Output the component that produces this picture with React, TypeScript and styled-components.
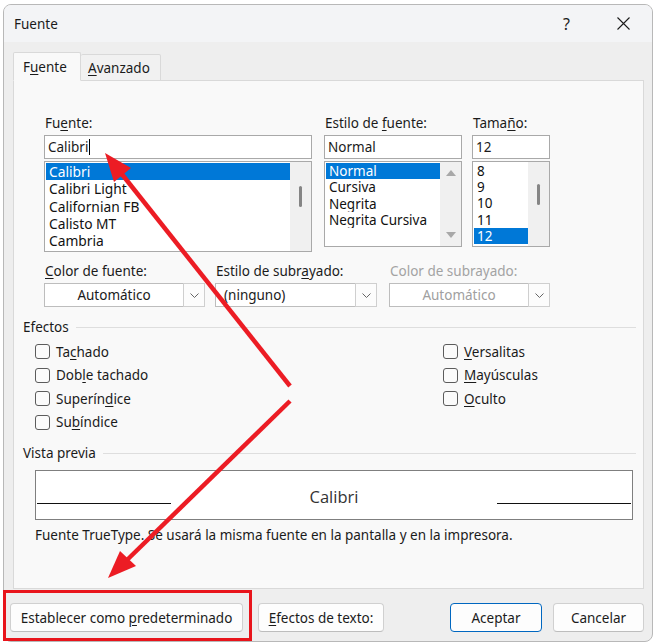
import React from 'react';
import styled, { createGlobalStyle } from 'styled-components';

const GlobalStyle = createGlobalStyle`
  html, body {
    margin: 0;
    padding: 0;
    background: #ffffff;
  }
  body {
    font-family: "Noto Sans", "Open Sans", sans-serif;
    font-size: 13.5px;
    color: #1b1b1b;
  }
  * {
    box-sizing: border-box;
  }
`;

const Stage = styled.div`
  position: relative;
  width: 656px;
  height: 643px;
  padding: 4px 0 0 3px;
  overflow: hidden;
`;

const Window = styled.div`
  width: 650px;
  height: 638px;
  border: 1px solid #b8b8b8;
  border-radius: 8px;
  background: #eeeeee;
  display: flex;
  flex-direction: column;
  overflow: hidden;
`;

const TitleBar = styled.div`
  height: 37px;
  display: flex;
  align-items: center;
  padding-left: 10px;
  background: #f3f4f6;
`;

const Title = styled.span`
  flex: 1;
  font-size: 13.5px;
  color: #1b1b1b;
`;

const TitleButton = styled.div`
  width: 57px;
  height: 37px;
  display: flex;
  align-items: center;
  justify-content: center;
  font-size: 16px;
  color: #1b1b1b;
`;

const Body = styled.div`
  flex: 1;
  display: flex;
  flex-direction: column;
  padding: 10px 8px 0 9px;
`;

const TabRow = styled.div`
  position: relative;
  z-index: 1;
  display: flex;
  align-items: flex-end;
  height: 29px;
  margin-bottom: -1px;
`;

const Tab = styled.div<{ $active?: boolean }>`
  height: ${p => (p.$active ? '29px' : '27px')};
  padding: ${p => (p.$active ? '0 9px' : '0 7px')};
  display: flex;
  align-items: center;
  background: ${p => (p.$active ? '#f9f9f9' : '#f1f1f1')};
  border: 1px solid #d9d9d9;
  border-left: ${p => (p.$active ? '1px solid #d9d9d9' : 'none')};
  border-bottom: 1px solid ${p => (p.$active ? '#f9f9f9' : '#d9d9d9')};
  border-radius: 2px 2px 0 0;
  width: ${p => (p.$active ? '68px' : '80px')};
`;

const Panel = styled.div`
  height: 509px;
  background: #f9f9f9;
  border: 1px solid #d9d9d9;
  padding: 34px 7px 0 9px;
  display: flex;
  flex-direction: column;
`;

const Row = styled.div<{ $top?: number }>`
  display: flex;
  padding-left: 21px;
  margin-top: ${p => p.$top || 0}px;
`;

const Field = styled.div<{ $w: number; $ml?: number }>`
  width: ${p => p.$w}px;
  margin-left: ${p => p.$ml || 0}px;
  display: flex;
  flex-direction: column;
`;

const Label = styled.label<{ $disabled?: boolean }>`
  height: 16px;
  line-height: 16px;
  margin-bottom: 4px;
  padding-left: 1px;
  color: ${p => (p.$disabled ? '#a3a3a3' : '#1b1b1b')};
  white-space: nowrap;
`;

const Key = styled.span`
  text-decoration: underline;
  text-underline-offset: 2px;
`;

const TextBox = styled.div`
  height: 24px;
  background: #ffffff;
  border: 1px solid #a9a9a9;
  display: flex;
  align-items: center;
  padding-left: 3px;
`;

const Caret = styled.span`
  display: inline-block;
  width: 1px;
  height: 16px;
  background: #000;
  margin-left: 1px;
`;

const ListBox = styled.div<{ $h: number }>`
  margin-top: 2px;
  height: ${p => p.$h}px;
  background: #ffffff;
  border: 1px solid #a9a9a9;
  display: flex;
  overflow: hidden;
`;

const ListItems = styled.div`
  flex: 1;
  padding: 1px 0 0 1px;
  display: flex;
  flex-direction: column;
  overflow: hidden;
`;

const Item = styled.div<{ $selected?: boolean; $h: number; $size: number }>`
  height: ${p => p.$h}px;
  line-height: ${p => p.$h}px;
  padding-left: 3px;
  font-size: ${p => p.$size}px;
  white-space: nowrap;
  overflow: hidden;
  background: ${p => (p.$selected ? '#0078d7' : 'transparent')};
  color: ${p => (p.$selected ? '#ffffff' : '#111111')};
`;

const ScrollTrack = styled.div`
  width: 21px;
  background: #f0f0f0;
  display: flex;
  flex-direction: column;
  align-items: center;
  justify-content: space-between;
  padding: 8px 0 8px 0;
`;

const Thumb = styled.div<{ $top: number }>`
  width: 3px;
  height: 21px;
  border-radius: 2px;
  background: #858585;
  margin-top: ${p => p.$top}px;
  align-self: center;
`;

const ArrowUp = styled.div`
  width: 0;
  height: 0;
  border-left: 5px solid transparent;
  border-right: 5px solid transparent;
  border-bottom: 6px solid #a8a8a8;
`;

const ArrowDown = styled(ArrowUp)`
  border-bottom: none;
  border-top: 6px solid #a8a8a8;
`;

const Combo = styled.div<{ $disabled?: boolean }>`
  height: 24px;
  background: #ffffff;
  border: 1px solid #bdbdbd;
  display: flex;
  align-items: stretch;
  color: ${p => (p.$disabled ? '#a0a0a0' : '#1b1b1b')};
`;

const ComboText = styled.div<{ $center?: boolean }>`
  flex: 1;
  display: flex;
  align-items: center;
  justify-content: ${p => (p.$center ? 'center' : 'flex-start')};
  padding-left: ${p => (p.$center ? '0' : '8px')};
`;

const ComboButton = styled.div`
  width: 22px;
  margin: -1px -1px -1px 0;
  border: 1px solid #cfcfcf;
  background: #fcfcfc;
  display: flex;
  align-items: center;
  justify-content: center;
`;

const GroupHeader = styled.div<{ $top: number }>`
  display: flex;
  align-items: center;
  gap: 7px;
  height: 16px;
  margin-top: ${p => p.$top}px;
  color: #1b1b1b;
  &::after {
    content: '';
    flex: 1;
    height: 1px;
    background: #dedede;
  }
`;

const Checks = styled.div`
  display: grid;
  grid-template-columns: 408px 1fr;
  grid-template-rows: repeat(4, 23.5px);
  padding-left: 12px;
  margin-top: 5px;
`;

const CheckRow = styled.div<{ $col: number; $row: number }>`
  grid-column: ${p => p.$col};
  grid-row: ${p => p.$row};
  display: flex;
  align-items: center;
  gap: 6px;
`;

const Box = styled.span`
  width: 15px;
  height: 15px;
  border: 1px solid #5c5c5c;
  border-radius: 3px;
  background: #fbfbfb;
`;

const Preview = styled.div`
  margin: 9px 0 0 12px;
  width: 598px;
  height: 50px;
  background: #ffffff;
  border: 1px solid #7f7f7f;
  display: flex;
  align-items: flex-end;
  padding: 0 1px 15px 1px;
`;

const PreviewLine = styled.div`
  width: 134px;
  height: 1px;
  background: #111;
`;

const PreviewText = styled.div`
  flex: 1;
  text-align: center;
  font-family: "Open Sans", "Noto Sans", sans-serif;
  font-size: 16.5px;
  color: #333;
  line-height: 20px;
  margin-bottom: -3px;
`;

const Note = styled.div`
  margin: 7px 0 0 12px;
  height: 16px;
  line-height: 16px;
`;

const Footer = styled.div`
  display: flex;
  align-items: center;
  margin: 14px 0 0 -3px;
`;

const Button = styled.div<{ $w: number; $primary?: boolean; $ml?: number }>`
  width: ${p => p.$w}px;
  height: 29px;
  margin-left: ${p => p.$ml || 0}px;
  display: flex;
  align-items: center;
  justify-content: center;
  background: #fdfdfd;
  border: 1px solid ${p => (p.$primary ? '#0067c0' : '#d0d0d0')};
  border-bottom-color: ${p => (p.$primary ? '#0067c0' : '#bdbdbd')};
  border-radius: 4px;
  white-space: nowrap;
`;

const Spacer = styled.div`
  flex: 1;
`;

const Overlay = styled.svg`
  position: absolute;
  left: 0;
  top: 0;
  pointer-events: none;
`;

const Highlight = styled.div`
  position: absolute;
  left: 3px;
  top: 590px;
  width: 249px;
  height: 51px;
  border: 3px solid #e8141b;
`;

const Chevron = () => (
  <svg width="9" height="5" viewBox="0 0 9 5">
    <path d="M0.5 0.5 L4.5 4.5 L8.5 0.5" fill="none" stroke="#666" strokeWidth="1" />
  </svg>
);

const Close = () => (
  <svg width="13" height="13" viewBox="0 0 13 13">
    <path d="M0.5 0.5 L12.5 12.5 M12.5 0.5 L0.5 12.5" stroke="#1b1b1b" strokeWidth="1.1" />
  </svg>
);

const fonts = ['Calibri', 'Calibri Light', 'Californian FB', 'Calisto MT', 'Cambria'];
const styles = ['Normal', 'Cursiva', 'Negrita', 'Negrita Cursiva'];
const sizes = ['8', '9', '10', '11', '12'];

const App: React.FC = () => {
  return (
    <Stage>
      <GlobalStyle />
      <Window>
        <TitleBar>
          <Title>Fuente</Title>
          <TitleButton>?</TitleButton>
          <TitleButton>
            <Close />
          </TitleButton>
        </TitleBar>
        <Body>
          <TabRow>
            <Tab $active>
              F<Key>u</Key>ente
            </Tab>
            <Tab>
              <Key>A</Key>vanzado
            </Tab>
          </TabRow>
          <Panel>
            <Row>
              <Field $w={268}>
                <Label>
                  Fu<Key>e</Key>nte:
                </Label>
                <TextBox>
                  Calibri
                  <Caret />
                </TextBox>
                <ListBox $h={91}>
                  <ListItems>
                    {fonts.map((f, i) => (
                      <Item key={f} $selected={i === 0} $h={17.3} $size={13.8}>
                        {f}
                      </Item>
                    ))}
                  </ListItems>
                  <ScrollTrack>
                    <Thumb $top={16} />
                    <Spacer />
                  </ScrollTrack>
                </ListBox>
              </Field>
              <Field $w={138} $ml={12}>
                <Label>
                  Estilo de <Key>f</Key>uente:
                </Label>
                <TextBox>Normal</TextBox>
                <ListBox $h={86}>
                  <ListItems>
                    {styles.map((s, i) => (
                      <Item key={s} $selected={i === 0} $h={16.3} $size={13.5}>
                        {s}
                      </Item>
                    ))}
                  </ListItems>
                  <ScrollTrack>
                    <ArrowUp />
                    <ArrowDown />
                  </ScrollTrack>
                </ListBox>
              </Field>
              <Field $w={78} $ml={10}>
                <Label>
                  Tama<Key>ñ</Key>o:
                </Label>
                <TextBox>12</TextBox>
                <ListBox $h={86}>
                  <ListItems>
                    {sizes.map((s, i) => (
                      <Item key={s} $selected={i === 4} $h={16.2} $size={13.5}>
                        {s}
                      </Item>
                    ))}
                  </ListItems>
                  <ScrollTrack>
                    <Thumb $top={14} />
                    <Spacer />
                  </ScrollTrack>
                </ListBox>
              </Field>
            </Row>

            <Row $top={11}>
              <Field $w={161}>
                <Label>
                  <Key>C</Key>olor de fuente:
                </Label>
                <Combo>
                  <ComboText $center>Automático</ComboText>
                  <ComboButton>
                    <Chevron />
                  </ComboButton>
                </Combo>
              </Field>
              <Field $w={162} $ml={10}>
                <Label>
                  Estilo de subr<Key>a</Key>yado:
                </Label>
                <Combo>
                  <ComboText>(ninguno)</ComboText>
                  <ComboButton>
                    <Chevron />
                  </ComboButton>
                </Combo>
              </Field>
              <Field $w={161} $ml={12}>
                <Label $disabled>Color de subrayado:</Label>
                <Combo $disabled>
                  <ComboText $center>Automático</ComboText>
                  <ComboButton>
                    <Chevron />
                  </ComboButton>
                </Combo>
              </Field>
            </Row>

            <GroupHeader $top={12}>Efectos</GroupHeader>
            <Checks>
              <CheckRow $col={1} $row={1}>
                <Box />
                <span>
                  Ta<Key>c</Key>hado
                </span>
              </CheckRow>
              <CheckRow $col={1} $row={2}>
                <Box />
                <span>
                  Dob<Key>l</Key>e tachado
                </span>
              </CheckRow>
              <CheckRow $col={1} $row={3}>
                <Box />
                <span>
                  Superín<Key>d</Key>ice
                </span>
              </CheckRow>
              <CheckRow $col={1} $row={4}>
                <Box />
                <span>
                  Su<Key>b</Key>índice
                </span>
              </CheckRow>
              <CheckRow $col={2} $row={1}>
                <Box />
                <span>
                  <Key>V</Key>ersalitas
                </span>
              </CheckRow>
              <CheckRow $col={2} $row={2}>
                <Box />
                <span>
                  <Key>M</Key>ayúsculas
                </span>
              </CheckRow>
              <CheckRow $col={2} $row={3}>
                <Box />
                <span>
                  <Key>O</Key>culto
                </span>
              </CheckRow>
            </Checks>

            <GroupHeader $top={11}>Vista previa</GroupHeader>
            <Preview>
              <PreviewLine />
              <PreviewText>Calibri</PreviewText>
              <PreviewLine />
            </Preview>
            <Note>Fuente TrueType. Se usará la misma fuente en la pantalla y en la impresora.</Note>
          </Panel>

          <Footer>
            <Button $w={233}>
              Establecer como&nbsp;<Key>p</Key>redeterminado
            </Button>
            <Button $w={126} $ml={15}>
              <Key>E</Key>fectos de texto:
            </Button>
            <Spacer />
            <Button $w={92} $primary>
              Aceptar
            </Button>
            <Button $w={91} $ml={11}>
              Cancelar
            </Button>
          </Footer>
        </Body>
      </Window>

      <Highlight />
      <Overlay width="656" height="643" viewBox="0 0 656 643">
        <g fill="#ec1c24" stroke="#ec1c24" strokeWidth="4.5" strokeLinecap="butt">
          <line x1="290" y1="386" x2="121" y2="173" />
          <polygon points="105,153 131,168 114,182" stroke="none" />
          <line x1="290" y1="401" x2="127" y2="560" />
          <polygon points="108,578 136,566 120,551" stroke="none" />
        </g>
      </Overlay>
    </Stage>
  );
};

export default App;
